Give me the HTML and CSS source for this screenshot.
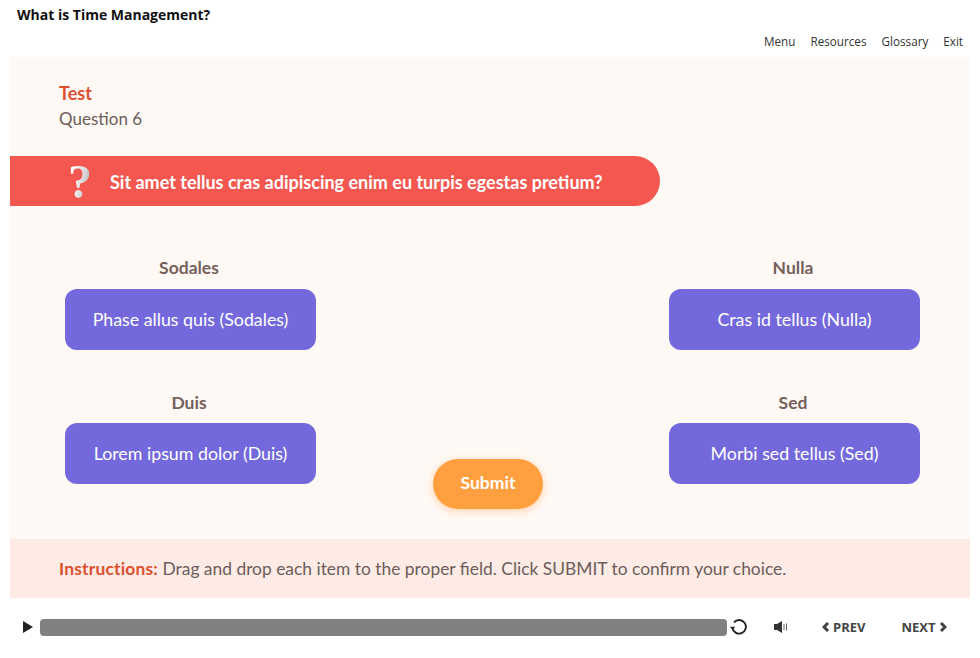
FILE: index.html
```html
<!DOCTYPE html>
<html lang="en">
<head>
    <meta charset="UTF-8">
    <title>What is Time Management?</title>
    <link rel="stylesheet" href="styles.css">
</head>
<body>
    <header class="top-bar">
        <h1 class="course-title">What is Time Management?</h1>
        <nav class="top-nav">
            <a href="#">Menu</a>
            <a href="#">Resources</a>
            <a href="#">Glossary</a>
            <a href="#">Exit</a>
        </nav>
    </header>

    <main class="slide">
        <div class="slide-heading">
            <div class="slide-kicker">Test</div>
            <div class="slide-sub">Question 6</div>
        </div>

        <div class="question-bar">
            <span class="question-mark">?</span>
            <span class="question-text">Sit amet tellus cras adipiscing enim eu turpis egestas pretium?</span>
        </div>

        <div class="drop-grid">
            <div class="drop-col">
                <div class="drop-label">Sodales</div>
                <div class="drag-card">Phase allus quis (Sodales)</div>
            </div>
            <div class="drop-col drop-col-right">
                <div class="drop-label">Nulla</div>
                <div class="drag-card">Cras id tellus (Nulla)</div>
            </div>
            <div class="drop-col">
                <div class="drop-label">Duis</div>
                <div class="drag-card">Lorem ipsum dolor (Duis)</div>
            </div>
            <button class="submit-btn" type="button">Submit</button>
            <div class="drop-col drop-col-right">
                <div class="drop-label">Sed</div>
                <div class="drag-card">Morbi sed tellus (Sed)</div>
            </div>
        </div>
    </main>

    <div class="instructions">
        <strong>Instructions:</strong> Drag and drop each item to the proper field. Click SUBMIT to confirm your choice.
    </div>

    <footer class="player">
        <svg class="icon-play" width="12" height="14" viewBox="0 0 12 14"><path d="M1 1 L11 7 L1 13 Z" fill="#222"/></svg>
        <div class="progress"></div>
        <svg class="icon-replay" width="18" height="18" viewBox="0 0 18 18">
            <path d="M4 4.4 A6.8 6.8 0 1 1 2.4 9.6" fill="none" stroke="#222" stroke-width="1.9"/>
            <path d="M0 8.8 L5.2 8.8 L2.6 12 Z" fill="#222"/>
        </svg>
        <svg class="icon-sound" width="16" height="14" viewBox="0 0 16 14">
            <path d="M1 4 H4 L9 1 V13 L4 10 H1 Z" fill="#333"/>
            <path d="M11 4 V10 M13.5 3.5 V10.5" stroke="#666" stroke-width="1" fill="none"/>
        </svg>
        <a class="nav-btn nav-prev" href="#">
            <svg width="8" height="10" viewBox="0 0 8 10"><path d="M6 1 L2 5 L6 9" fill="none" stroke="#444" stroke-width="3"/></svg>
            PREV
        </a>
        <a class="nav-btn nav-next" href="#">
            NEXT
            <svg width="8" height="10" viewBox="0 0 8 10"><path d="M2 1 L6 5 L2 9" fill="none" stroke="#444" stroke-width="3"/></svg>
        </a>
    </footer>
</body>
</html>
```

FILE: styles.css
```css
/* Global */
html, body {
    height: 100%;
}

body {
    margin: 0;
    background-color: #fff;
    font-family: "Lato", "Open Sans", sans-serif;
    overflow: hidden;
}

/* Top bar */
.top-bar {
    height: 57px;
    padding: 0 17px;
    box-sizing: border-box;
}

.course-title {
    margin: 0;
    padding-top: 5px;
    font-family: "Open Sans", sans-serif;
    font-size: 14px;
    line-height: 19px;
    font-weight: 700;
    color: #111;
}

.top-nav {
    display: flex;
    justify-content: flex-end;
    gap: 15px;
    margin-top: 8px;
    font-family: "Open Sans", sans-serif;
    font-size: 11.7px;
    line-height: 19px;
}

.top-nav a {
    color: #333;
    text-decoration: none;
}

/* Slide */
.slide {
    height: 482px;
    margin: 0 10px;
    background-color: #fff9f6;
    overflow: hidden;
}

.slide-heading {
    padding: 24px 0 0 49px;
}

.slide-kicker {
    font-size: 18px;
    line-height: 25px;
    font-weight: 700;
    color: #dc5030;
}

.slide-sub {
    font-size: 17px;
    line-height: 26px;
    color: #6b5d5a;
}

.question-bar {
    display: flex;
    align-items: center;
    width: 650px;
    height: 50px;
    margin-top: 24px;
    padding: 1px 0 0 57px;
    box-sizing: border-box;
    background-color: #f4574f;
    border-radius: 0 25px 25px 0;
}

.question-mark {
    width: 26px;
    margin-right: 17px;
    font-family: "Liberation Serif", serif;
    font-size: 48px;
    line-height: 50px;
    font-weight: 700;
    text-align: center;
    color: transparent;
    background: linear-gradient(100deg, #fff 30%, #bbb 80%);
    -webkit-background-clip: text;
    background-clip: text;
}

.question-text {
    font-size: 18px;
    font-weight: 700;
    color: #fff;
}

/* Drag and drop */
.drop-grid {
    display: grid;
    grid-template-columns: 251px 1fr 251px;
    grid-auto-rows: 134.5px;
    padding: 51px 50px 0 55px;
}

.drop-col {
    grid-column: 1;
}

.drop-col-right {
    grid-column: 3;
}

.drop-label {
    font-size: 17.5px;
    line-height: 22px;
    font-weight: 700;
    text-align: center;
    color: #75605a;
    margin-bottom: 9.6px;
    padding-right: 3px;
}

.drag-card {
    display: flex;
    align-items: center;
    justify-content: center;
    height: 61px;
    padding-bottom: 1px;
    box-sizing: border-box;
    border-radius: 12px;
    background-color: #7469dc;
    font-size: 17.8px;
    color: #fff;
}

.submit-btn {
    grid-column: 2;
    justify-self: center;
    width: 110px;
    height: 50px;
    margin: 67.5px 9px 0 0;
    padding: 0 0 3px;
    border: none;
    border-radius: 25px;
    background-color: #ff9f40;
    box-shadow: 0 2px 8px rgba(255, 159, 64, 0.45);
    font-family: inherit;
    font-size: 17.5px;
    font-weight: 700;
    color: #fff;
}

/* Instructions */
.instructions {
    height: 59px;
    margin: 0 10px;
    padding-left: 49px;
    background-color: #ffebe5;
    font-size: 17.4px;
    line-height: 59px;
    color: #6b5d5a;
}

.instructions strong {
    color: #dc5030;
    letter-spacing: 0.2px;
}

/* Player */
.player {
    display: flex;
    align-items: center;
    height: 58px;
    padding-left: 22px;
}

.progress {
    width: 687px;
    height: 17px;
    margin-left: 6px;
    border-radius: 4px;
    background-color: #808080;
}

.icon-replay {
    margin-left: 3px;
}

.icon-sound {
    margin-left: 25px;
}

.nav-btn {
    display: flex;
    align-items: center;
    gap: 3px;
    font-family: "Open Sans", sans-serif;
    font-size: 13px;
    font-weight: 700;
    color: #444;
    text-decoration: none;
}

.nav-prev {
    margin-left: 33px;
}

.nav-next {
    margin-left: 36px;
}
```
